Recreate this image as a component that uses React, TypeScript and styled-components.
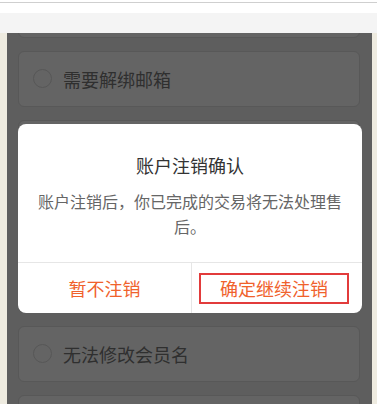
import React from "react";
import styled, { createGlobalStyle } from "styled-components";

const GlobalStyle = createGlobalStyle`
  html, body {
    margin: 0;
    padding: 0;
    background: #ffffff;
    font-family: "Noto Sans CJK SC", "Noto Sans", sans-serif;
  }
`;

const reasons = [
  "需要解绑手机",
  "需要解绑邮箱",
  "安全/隐私顾虑",
  "这是多余的账户",
  "想换个账户",
  "无法修改会员名",
  "其他原因",
];

export default function App() {
  return (
    <Page>
      <GlobalStyle />
      <TopBar />
      <SubBar />
      <Frame>
        <Screen>
          <ReasonList>
            {reasons.map((r) => (
              <ReasonCard key={r}>
                <Radio />
                <ReasonText>{r}</ReasonText>
              </ReasonCard>
            ))}
          </ReasonList>
          <Dialog>
            <DialogTitle>账户注销确认</DialogTitle>
            <DialogBody>账户注销后，你已完成的交易将无法处理售后。</DialogBody>
            <ButtonRow>
              <DialogButton>暂不注销</DialogButton>
              <DialogButton>
                <Highlight>确定继续注销</Highlight>
              </DialogButton>
            </ButtonRow>
          </Dialog>
        </Screen>
      </Frame>
    </Page>
  );
}

const Page = styled.div`
  width: 377px;
  height: 404px;
  overflow: hidden;
  display: flex;
  flex-direction: column;
`;

const TopBar = styled.div`
  height: 10px;
  margin-top: 2px;
  border-top: 1px solid #cfcfcf;
  background: #ffffff;
`;

const SubBar = styled.div`
  height: 20px;
  background: #f4f4f4;
`;

const Frame = styled.div`
  flex: 1;
  display: flex;
  padding: 0 5px 0 7px;
  background: #eeebe0;
  min-height: 0;
`;

const Screen = styled.div`
  position: relative;
  flex: 1;
  background: #5e5e5e;
  overflow: hidden;
  padding: 0 12px 0 11px;
`;

const ReasonList = styled.div`
  display: flex;
  flex-direction: column;
  gap: 12.8px;
  margin-top: -51px;
`;

const ReasonCard = styled.div`
  height: 56px;
  flex-shrink: 0;
  box-sizing: border-box;
  display: flex;
  align-items: center;
  gap: 11px;
  padding-left: 14px;
  background: #646464;
  border: 1px solid #585858;
  border-radius: 6px;
`;

const Radio = styled.span`
  width: 19px;
  height: 19px;
  box-sizing: border-box;
  border-radius: 50%;
  border: 1px solid #575757;
`;

const ReasonText = styled.span`
  font-size: 18px;
  color: #2f2f2f;
`;

const Dialog = styled.div`
  position: absolute;
  left: 11px;
  top: 91px;
  width: 344px;
  height: 189px;
  background: #ffffff;
  border-radius: 8px;
  display: flex;
  flex-direction: column;
  overflow: hidden;
`;

const DialogTitle = styled.div`
  margin-top: 27px;
  font-size: 18px;
  line-height: 28px;
  color: #333333;
  text-align: center;
`;

const DialogBody = styled.div`
  margin-top: 10px;
  padding: 0 18px;
  font-size: 16px;
  line-height: 25px;
  color: #666666;
  text-align: center;
`;

const ButtonRow = styled.div`
  margin-top: auto;
  height: 50px;
  display: grid;
  grid-template-columns: 173px 1fr;
  border-top: 1px solid #e6e6e6;
  & > * + * {
    border-left: 1px solid #e6e6e6;
  }
`;

const DialogButton = styled.div`
  display: flex;
  align-items: center;
  justify-content: center;
  font-size: 18px;
  color: #f0622c;
`;

const Highlight = styled.span`
  display: inline-block;
  padding: 1px 19px 1px 19px;
  line-height: 25px;
  border: 2px solid #e23b3b;
  margin-left: -6px;
`;
